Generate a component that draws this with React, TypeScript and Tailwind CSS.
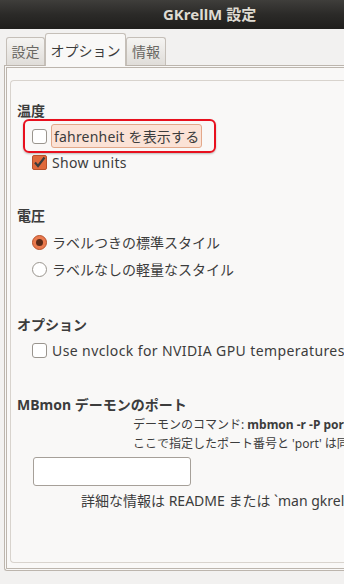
import React from "react";

const font = { fontFamily: '"Noto Sans", "Noto Sans CJK JP", sans-serif' };

function Check({ checked }: { checked?: boolean }) {
  if (checked) {
    return (
      <span className="inline-flex h-[15px] w-[15px] shrink-0 items-center justify-center rounded-[2px] border border-[#b8512b] bg-[#e06a3c]">
        <svg width="13" height="13" viewBox="0 0 13 13">
          <path d="M2 6.5 L5 10 L11.5 1.5" fill="none" stroke="#3c3c3c" strokeWidth="2.2" />
        </svg>
      </span>
    );
  }
  return <span className="inline-block h-[15px] w-[15px] shrink-0 rounded-[3px] border border-[#9a958e] bg-white" />;
}

function Radio({ on }: { on?: boolean }) {
  if (on) {
    return (
      <span className="inline-flex h-[15px] w-[15px] shrink-0 items-center justify-center rounded-full border border-[#b8512b] bg-[#ea7a4e]">
        <span className="h-[7px] w-[7px] rounded-full bg-[#5a2a18]" />
      </span>
    );
  }
  return <span className="inline-block h-[15px] w-[15px] shrink-0 rounded-full border border-[#9a958e] bg-white" />;
}

export default function App() {
  return (
    <div className="h-[584px] w-[344px] overflow-hidden bg-[#f2f1f0] text-[14px] leading-[19px] text-[#3c3c3c]" style={font}>
      {/* title bar */}
      <div className="flex h-[29px] items-center bg-gradient-to-b from-[#3f3e3b] via-[#2b2a28] to-[#1f1e1c] pl-[163px]">
        <span className="text-[15px] font-bold text-[#dfdbd2]">GKrellM 設定</span>
      </div>

      {/* tabs */}
      <div className="flex items-end pl-[6px] pt-[4px]">
        <div className="flex h-[28px] w-[39px] items-center justify-center rounded-t-[3px] border border-b-0 border-[#c5bfb8] bg-gradient-to-b from-[#f5f4f2] to-[#e0ddd9] text-[#6a6863]">
          設定
        </div>
        <div className="-mb-px flex h-[33px] w-[81px] items-center justify-center rounded-t-[3px] border border-b-0 border-[#c5bfb8] bg-[#f9f8f7] text-[#3c3c3c]">
          オプション
        </div>
        <div className="flex h-[28px] w-[40px] items-center justify-center rounded-t-[3px] border border-b-0 border-[#c5bfb8] bg-gradient-to-b from-[#f5f4f2] to-[#e0ddd9] text-[#6a6863]">
          情報
        </div>
      </div>

      {/* notebook page */}
      <div className="ml-[4px] h-[506px] rounded-bl-[3px] border-[3px] border-double border-r-0 border-[#bcb5ad] bg-[#f9f8f7] pl-[3px] pt-[12px]">
        <div className="h-[483px] rounded-l-[4px] border border-r-0 border-[#d8d3cd] bg-[#f9f8f7] pl-[6px] pt-[20px]">
          <div className="font-bold">温度</div>
          <div className="ml-[6px] mt-[-1px] flex h-[34px] w-[193px] items-center rounded-[6px] border-2 border-[#e8101e] pl-[7px] shadow-[0_1px_2px_rgba(0,0,0,0.25)]">
            <Check />
            <span className="ml-[4px] flex h-[24px] items-center rounded-[3px] border border-[#e3a88a] bg-[#fbe2d6] px-[2px] tracking-[0.2px]">
              fahrenheit を表示する
            </span>
          </div>
          <div className="ml-[15px] mt-0 flex items-center gap-[5px]">
            <Check checked />
            <span className="tracking-[0.3px]">Show units</span>
          </div>

          <div className="mt-[34px] font-bold">電圧</div>
          <div className="ml-[15px] mt-[8px] flex items-center gap-[5px]">
            <Radio on />
            <span>ラベルつきの標準スタイル</span>
          </div>
          <div className="ml-[15px] mt-[8px] flex items-center gap-[5px]">
            <Radio />
            <span>ラベルなしの軽量なスタイル</span>
          </div>

          <div className="mt-[36px] font-bold">オプション</div>
          <div className="ml-[15px] mt-[7px] flex items-center gap-[5px] whitespace-nowrap">
            <Check />
            <span className="tracking-[0.4px]">Use nvclock for NVIDIA GPU temperatures</span>
          </div>

          <div className="mt-[35px] whitespace-nowrap font-bold">MBmon デーモンのポート</div>
          <div className="ml-[116px] mt-[1px] whitespace-nowrap text-[12px] leading-[19px]">
            <div>
              デーモンのコマンド: <b>mbmon -r -P port</b>
            </div>
            <div>ここで指定したポート番号と 'port' は同じにしてください</div>
          </div>
          <div className="ml-[16px] mt-[4px] h-[29px] w-[158px] rounded-[3px] border border-[#a6a099] bg-white" />
          <div className="ml-[64px] mt-[5px] whitespace-nowrap">詳細な情報は README または `man gkrellm`</div>
        </div>
      </div>
    </div>
  );
}
